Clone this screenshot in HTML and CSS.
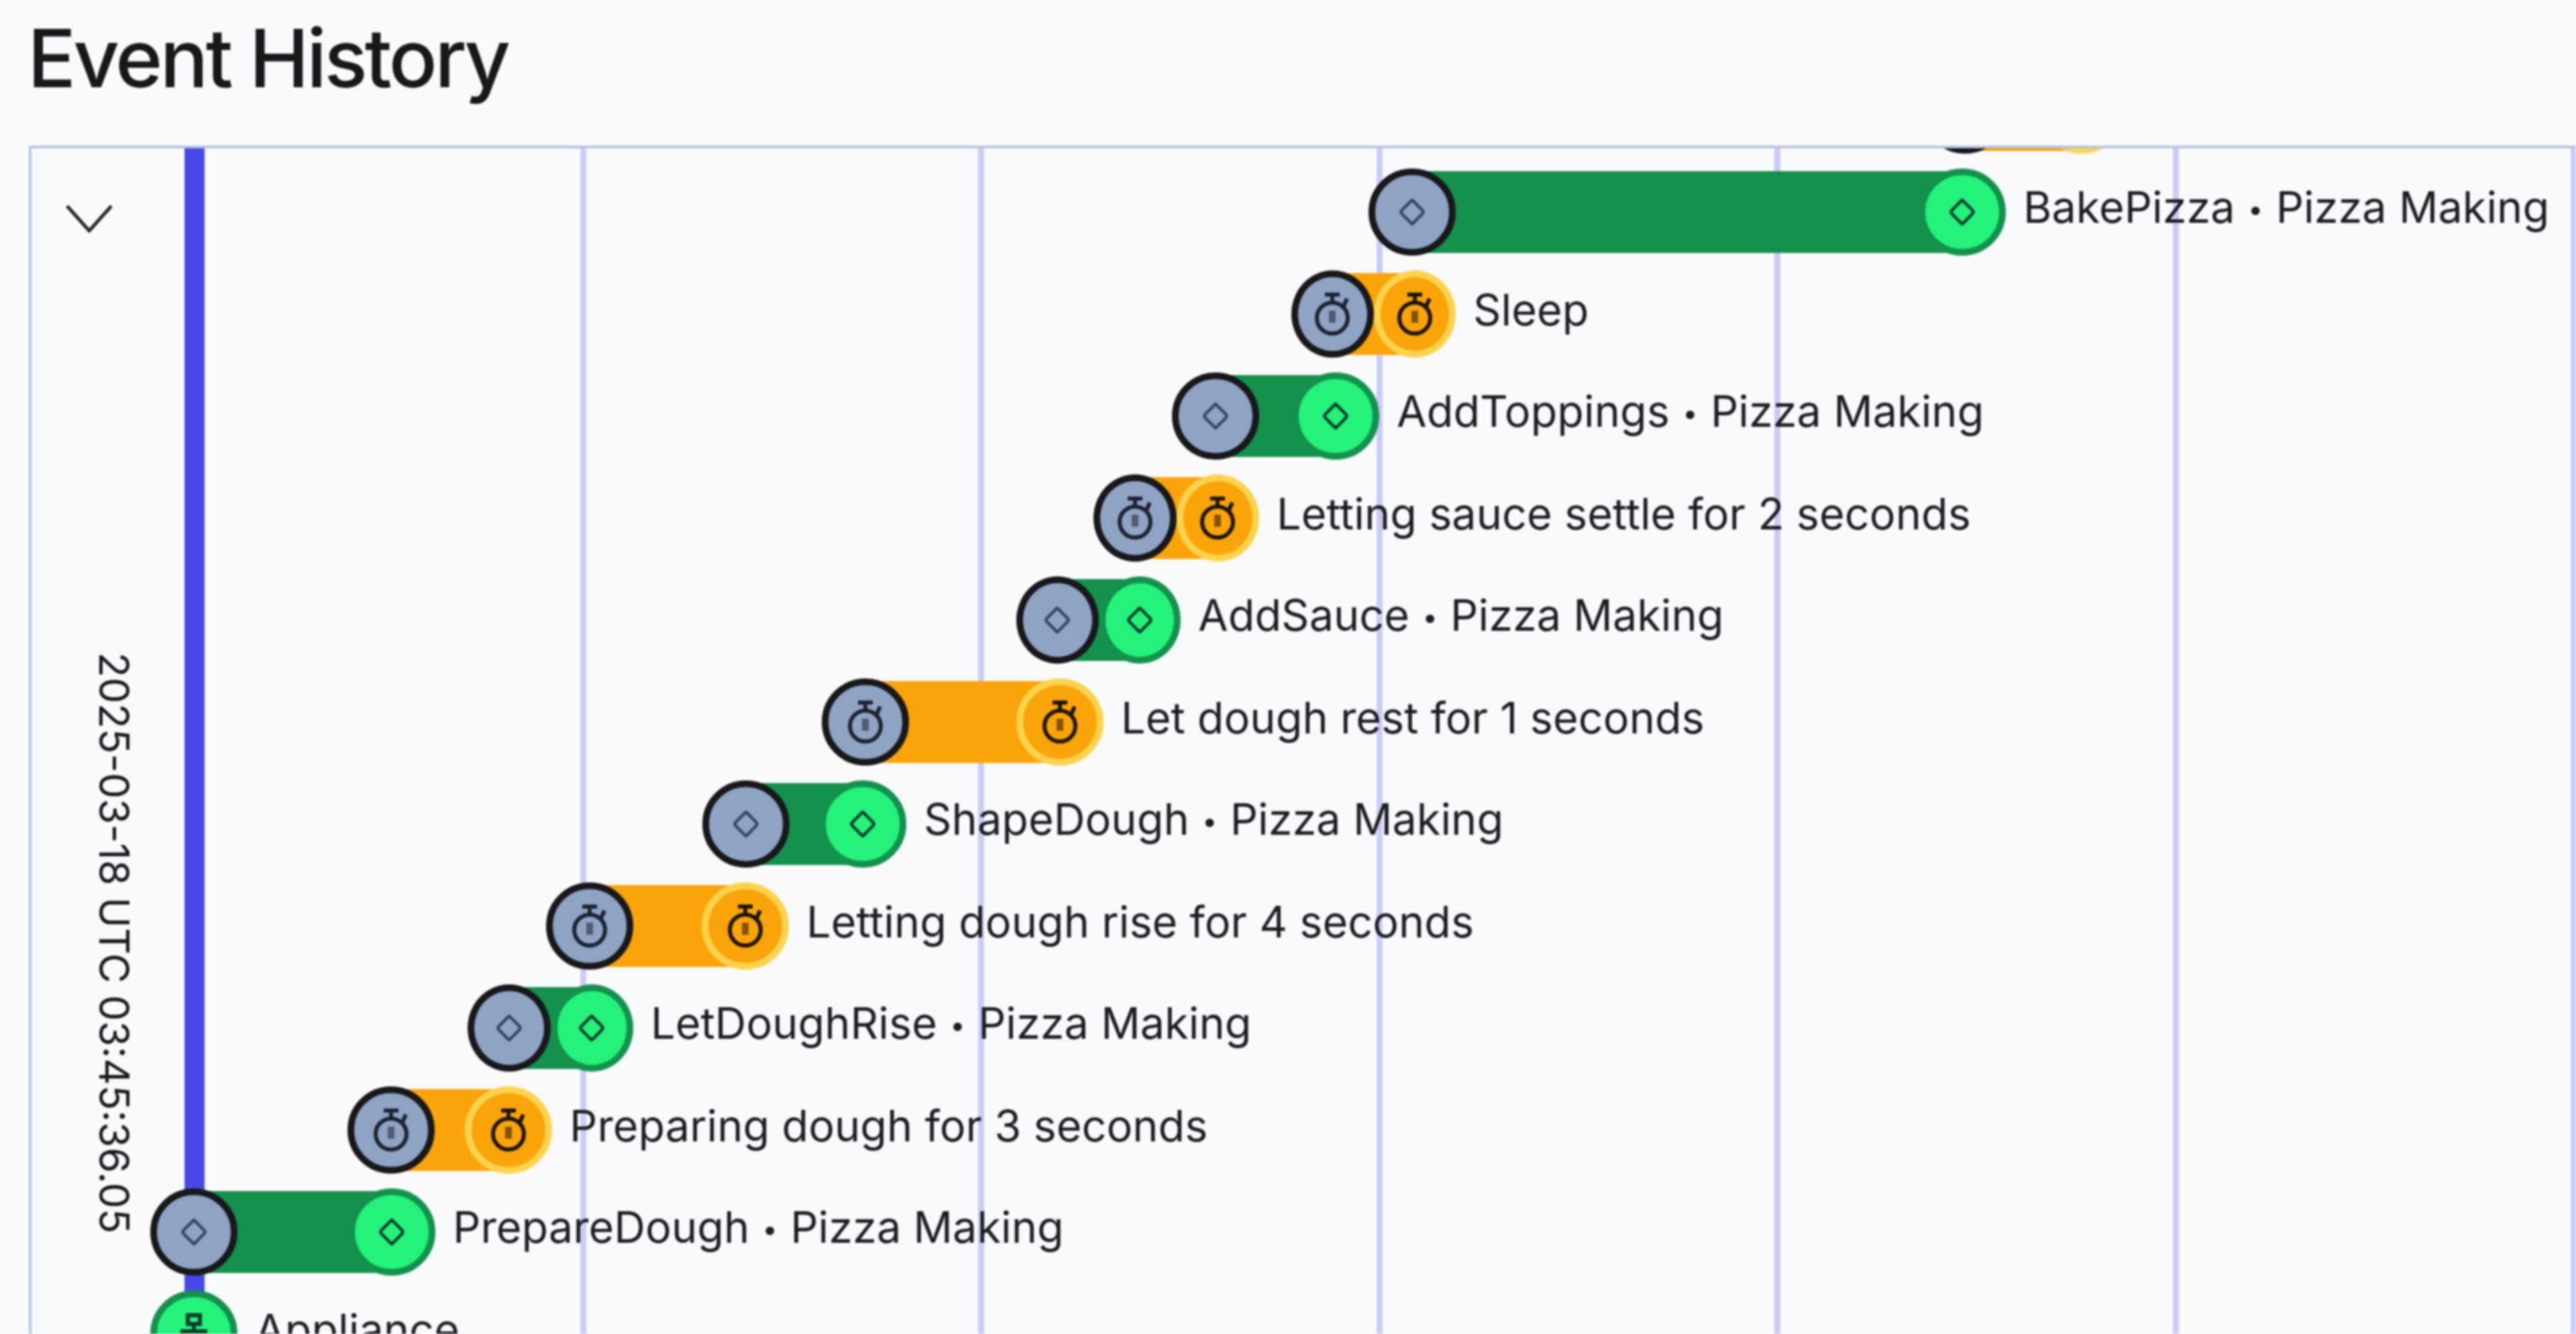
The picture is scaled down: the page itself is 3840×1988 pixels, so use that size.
FILE: index.html
```html
<!DOCTYPE html>
<html lang="en">
<head>
<meta charset="utf-8">
<title>Event History</title>
<link rel="stylesheet" href="styles.css">
</head>
<body>
<svg class="defs" aria-hidden="true">
  <symbol id="i-diamond" viewBox="0 0 40 40"><path d="M20 2 L35 17 Q38 20 35 23 L20 38 L5 23 Q2 20 5 17 Z"/></symbol>
  <symbol id="i-timer" viewBox="0 0 64 64"><path d="M21 3H43M32 4V15M54 9L49 20"/><circle cx="32" cy="38" r="23"/><path class="hand" d="M32 27V45"/></symbol>
  <symbol id="i-network" viewBox="0 0 64 64"><rect x="23" y="4" width="18" height="13"/><path d="M32 17V28M12 28H52"/></symbol>
</svg>
<main class="page">
  <h1 class="title">Event History</h1>
  <section class="chart">
    <div class="ticks"><i></i><i></i><i></i><i></i><i></i><i></i></div>
    <div class="axis"></div>
    <div class="gutter">
      <svg class="chevron" viewBox="0 0 70 42"><path d="M2 2L35 39L68 2"/></svg>
      <div class="date">2025-03-18 UTC 03:45:36.05</div>
    </div>
    <div class="rows">
      <div class="row" style="margin-left:2817px"><div class="span timer" style="width:304px"><span class="node start"><svg><use href="#i-timer"/></svg></span><span class="node end"><svg><use href="#i-timer"/></svg></span></div></div>
      <div class="row" style="margin-left:1993px"><div class="span act" style="width:950px"><span class="node start"><svg><use href="#i-diamond"/></svg></span><span class="node end"><svg><use href="#i-diamond"/></svg></span></div><div class="label">BakePizza<b>•</b>Pizza Making</div></div>
      <div class="row" style="margin-left:1878px"><div class="span timer" style="width:245px"><span class="node start"><svg><use href="#i-timer"/></svg></span><span class="node end"><svg><use href="#i-timer"/></svg></span></div><div class="label">Sleep</div></div>
      <div class="row" style="margin-left:1700px"><div class="span act" style="width:309px"><span class="node start"><svg><use href="#i-diamond"/></svg></span><span class="node end"><svg><use href="#i-diamond"/></svg></span></div><div class="label">AddToppings<b>•</b>Pizza Making</div></div>
      <div class="row" style="margin-left:1583px"><div class="span timer" style="width:247px"><span class="node start"><svg><use href="#i-timer"/></svg></span><span class="node end"><svg><use href="#i-timer"/></svg></span></div><div class="label">Letting sauce settle for 2 seconds</div></div>
      <div class="row" style="margin-left:1468px"><div class="span act" style="width:245px"><span class="node start"><svg><use href="#i-diamond"/></svg></span><span class="node end"><svg><use href="#i-diamond"/></svg></span></div><div class="label">AddSauce<b>•</b>Pizza Making</div></div>
      <div class="row" style="margin-left:1178px"><div class="span timer" style="width:420px"><span class="node start"><svg><use href="#i-timer"/></svg></span><span class="node end"><svg><use href="#i-timer"/></svg></span></div><div class="label">Let dough rest for 1 seconds</div></div>
      <div class="row" style="margin-left:1000px"><div class="span act" style="width:304px"><span class="node start"><svg><use href="#i-diamond"/></svg></span><span class="node end"><svg><use href="#i-diamond"/></svg></span></div><div class="label">ShapeDough<b>•</b>Pizza Making</div></div>
      <div class="row" style="margin-left:767px"><div class="span timer" style="width:362px"><span class="node start"><svg><use href="#i-timer"/></svg></span><span class="node end"><svg><use href="#i-timer"/></svg></span></div><div class="label">Letting dough rise for 4 seconds</div></div>
      <div class="row" style="margin-left:650px"><div class="span act" style="width:247px"><span class="node start"><svg><use href="#i-diamond"/></svg></span><span class="node end"><svg><use href="#i-diamond"/></svg></span></div><div class="label">LetDoughRise<b>•</b>Pizza Making</div></div>
      <div class="row" style="margin-left:471px"><div class="span timer" style="width:305px"><span class="node start"><svg><use href="#i-timer"/></svg></span><span class="node end"><svg><use href="#i-timer"/></svg></span></div><div class="label">Preparing dough for 3 seconds</div></div>
      <div class="row" style="margin-left:177px"><div class="span act" style="width:425px"><span class="node start"><svg><use href="#i-diamond"/></svg></span><span class="node end"><svg><use href="#i-diamond"/></svg></span></div><div class="label">PrepareDough<b>•</b>Pizza Making</div></div>
      <div class="row" style="margin-left:177px"><div class="span act solo"><span class="node end"><svg><use href="#i-network"/></svg></span></div><div class="label">Appliance</div></div>
    </div>
  </section>
</main>
</body>
</html>
```
FILE: styles.css
```css
* { box-sizing: border-box; }
html, body { margin: 0; height: 100%; overflow: hidden; }
body { background: #f9fafc; color: #18181b; font-family: Inter, "Liberation Sans", sans-serif; }
.defs { display: none; }
.page { height: 1988px; display: flex; flex-direction: column; padding-left: 43px; filter: blur(1.4px); }
.title { margin: 0 0 0 -2px; height: 217px; padding-top: 17px; font-size: 120px; line-height: 140px; font-weight: 500; letter-spacing: -4px; color: #18181b; }
.chart { position: relative; flex: 1; display: grid; overflow: hidden; border-top: 4px solid #b5c3df; border-left: 4px solid #b5c3df; }
.ticks { position: absolute; inset: 0; display: flex; padding-left: 233px; }
.ticks i { flex: 0 0 593.5px; border-right: 9px solid #cacbf8; }
.axis { position: absolute; left: 228px; top: 0; bottom: 0; width: 30px; background: #4749e6; }
.gutter, .rows { grid-area: 1 / 1; position: relative; }
.gutter { width: 228px; }
.chevron { position: absolute; left: 51px; top: 84px; width: 70px; height: 42px; fill: none; stroke: #27272a; stroke-width: 5px; }
.date { position: absolute; left: 91px; top: 751px; writing-mode: vertical-rl; font-size: 61.5px; line-height: 64px; white-space: nowrap; }
.rows { display: flex; flex-direction: column; margin-top: -133px; }
.row { flex: 0 0 152px; display: flex; align-items: center; white-space: nowrap; }
.span { position: relative; height: 130px; display: flex; justify-content: space-between; align-items: center; }
.span::before { content: ""; position: absolute; left: 65px; right: 65px; top: 4px; bottom: 4px; }
.span.solo::before { display: none; }
.node { position: relative; width: 130px; height: 130px; border-radius: 50%; display: flex; align-items: center; justify-content: center; border: 10px solid; }
.node svg { width: 64px; height: 64px; fill: none; stroke: currentColor; stroke-width: 6px; }
.act .node svg { width: 40px; height: 40px; stroke-width: 4.5px; }
.solo .node svg { width: 64px; height: 64px; stroke-width: 6px; }
.start { background: #8fa3c4; border-color: #18181b; color: #364462; }
.timer .start { color: #1c2230; }
.act::before { background: #13914d; }
.act .end { background: #24f27b; border-color: #13914d; color: #0b3b28; }
.timer::before { background: #fba40a; }
.timer .end { background: #fba40a; border-color: #fcd34d; color: #1c1406; }
.label { margin: 0 0 12px 26px; font-size: 64.8px; line-height: 80px; color: #1c1c20; }
.label b { display: inline-block; margin: 0 21px; font-weight: 700; font-size: 40px; vertical-align: 6px; }
.hand { opacity: .55; stroke-width: 10px; }
```
